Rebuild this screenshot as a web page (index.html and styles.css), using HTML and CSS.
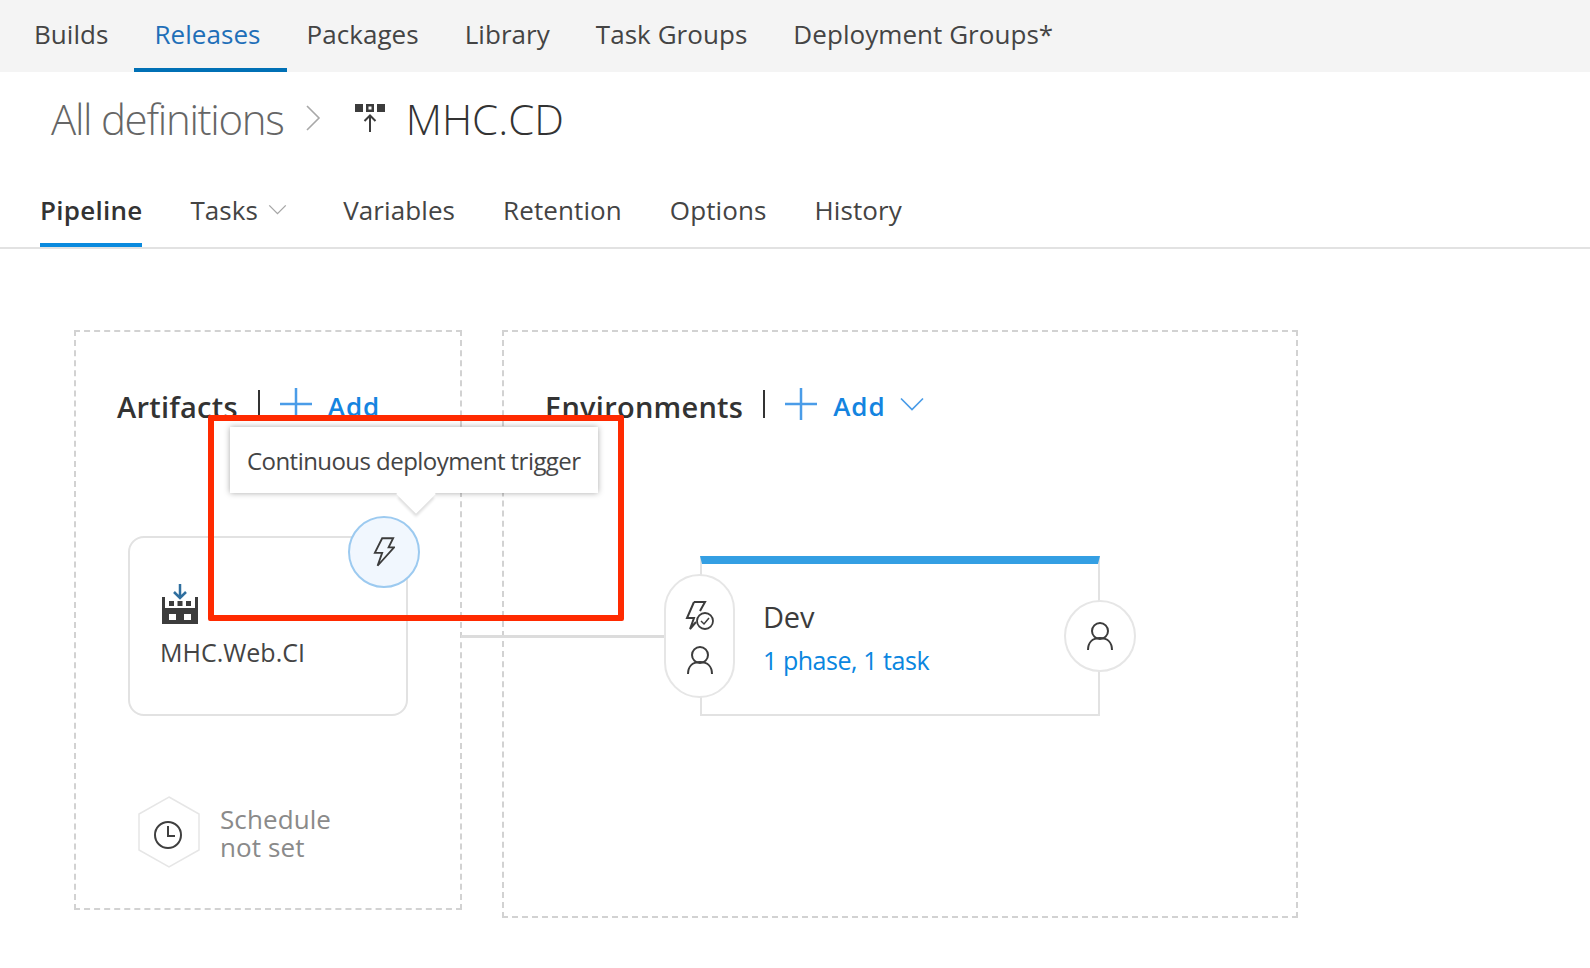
FILE: index.html
```html
<!DOCTYPE html>
<html lang="en">
<head>
<meta charset="utf-8">
<title>MHC.CD</title>
<link rel="stylesheet" href="styles.css">
</head>
<body>
<nav class="topnav">
  <a class="topnav-item">Builds</a>
  <a class="topnav-item is-active">Releases</a>
  <a class="topnav-item">Packages</a>
  <a class="topnav-item">Library</a>
  <a class="topnav-item">Task Groups</a>
  <a class="topnav-item">Deployment Groups*</a>
</nav>
<header class="crumbs">
  <span class="crumb-root">All definitions</span>
  <svg class="crumb-sep" viewBox="0 0 16 28"><path d="M2 2l12 12L2 26" fill="none" stroke="#a8a8a8" stroke-width="1.6"/></svg>
  <svg class="crumb-icon" viewBox="0 0 30 30"><path d="M0 1h8v8H0zM11 1h8v8h-8zm2.500 2.500v3h3v-3zM22 1h8v8h-8z" fill="#3c3c3c" fill-rule="evenodd"/><path d="M15 29V13M9.500 18l5.500-5.500 5.500 5.500" fill="none" stroke="#3c3c3c" stroke-width="2"/></svg>
  <span class="crumb-title">MHC.CD</span>
</header>
<div class="tabs">
  <a class="tab is-active">Pipeline</a>
  <a class="tab">Tasks<svg class="tab-chevron" viewBox="0 0 20 12"><path d="M1 1.500l9 9 9-9" fill="none" stroke="#a6a6a6" stroke-width="1.500"/></svg></a>
  <a class="tab">Variables</a>
  <a class="tab">Retention</a>
  <a class="tab">Options</a>
  <a class="tab">History</a>
</div>
<main class="canvas">
  <section class="zone zone-artifacts">
    <div class="zone-head">
      <h2 class="zone-title">Artifacts</h2>
      <span class="zone-sep"></span>
      <svg class="plus" viewBox="0 0 32 32"><path d="M16 0v32M0 16h32" stroke="#4a9ce8" stroke-width="2.500" fill="none"/></svg>
      <a class="zone-add">Add</a>
    </div>
    <div class="artifact-card">
      <svg class="artifact-icon" viewBox="0 0 36 40"><path d="M18 0v13M12 8l6 6 6-6" fill="none" stroke="#2f6f9f" stroke-width="2.500"/><path d="M0 13h3v11h30V13h3v27H0z" fill="#3c3c3c"/><path d="M7 17h5v5H7zM15.500 17h5v5h-5zM24 17h5v5h-5z" fill="#3c3c3c"/><path d="M7 30h7v6H7zM22 30h7v6h-7z" fill="#fff"/></svg>
      <div class="artifact-name">MHC.Web.CI</div>
    </div>
    <div class="schedule">
      <svg class="schedule-hex" viewBox="0 0 62 72"><path d="M31 1l30 17v36L31 71 1 54V18z" fill="#fff" stroke="#e6e6e6" stroke-width="1.500"/><circle cx="30" cy="39" r="13" fill="none" stroke="#3f3f3f" stroke-width="2"/><path d="M30 30v10h7" fill="none" stroke="#3f3f3f" stroke-width="2"/></svg>
      <div class="schedule-text">Schedule<br>not set</div>
    </div>
  </section>
  <section class="zone zone-envs">
    <div class="zone-head">
      <h2 class="zone-title">Environments</h2>
      <span class="zone-sep"></span>
      <svg class="plus" viewBox="0 0 32 32"><path d="M16 0v32M0 16h32" stroke="#4a9ce8" stroke-width="2.500" fill="none"/></svg>
      <a class="zone-add">Add</a>
      <svg class="add-chevron" viewBox="0 0 24 14"><path d="M1 1.500l11 11 11-11" fill="none" stroke="#4a9ce8" stroke-width="1.700"/></svg>
    </div>
    <div class="env-card">
      <div class="env-name">Dev</div>
      <a class="env-tasks">1 phase, 1 task</a>
    </div>
  </section>

  <div class="connector"></div>
  <div class="pill">
    <svg class="pill-bolt" viewBox="0 0 30 30"><path d="M9 1h11l-5 9M9 1L2 17h7L5 28l6-7" fill="none" stroke="#3c3c3c" stroke-width="2"/><circle cx="20" cy="20" r="8" fill="none" stroke="#3c3c3c" stroke-width="1.800"/><path d="M16 20l3 3 5-6" fill="none" stroke="#3c3c3c" stroke-width="1.500"/></svg>
    <svg class="person" viewBox="0 0 28 30"><circle cx="14" cy="10" r="8" fill="none" stroke="#3c3c3c" stroke-width="2"/><path d="M2 29c0-7 4-12 12-12s12 5 12 12" fill="none" stroke="#3c3c3c" stroke-width="2"/></svg>
  </div>
  <div class="post-approver">
    <svg class="person" viewBox="0 0 28 30"><circle cx="14" cy="10" r="8" fill="none" stroke="#3c3c3c" stroke-width="2"/><path d="M2 29c0-7 4-12 12-12s12 5 12 12" fill="none" stroke="#3c3c3c" stroke-width="2"/></svg>
  </div>
  <div class="annotation"></div>
  <div class="tooltip">Continuous deployment trigger</div>
  <div class="trigger">
    <svg class="trigger-bolt" viewBox="0 0 24 32"><path d="M10 1h12l-5 10h6L5 31l5-14H2z" fill="none" stroke="#3c3c3c" stroke-width="2" stroke-linejoin="miter"/></svg>
  </div>
</main>
</body>
</html>
```
FILE: styles.css
```css
* { box-sizing: border-box; }
html, body { margin: 0; padding: 0; }
body {
  width: 1590px;
  height: 968px;
  overflow: hidden;
  background: #fff;
  color: #333;
  font-family: "Open Sans", "Noto Sans", sans-serif;
}
a { display: block; }

.topnav {
  display: flex;
  height: 72px;
  padding-left: 14px;
  background: #f4f4f4;
}
.topnav-item {
  padding: 0 26px 0 20px;
  font-size: 26px;
  letter-spacing: 0.05px;
  line-height: 68px;
  color: #444;
}
.topnav-item.is-active {
  color: #1f6fb8;
  border-bottom: 4px solid #0070b5;
}

.crumbs {
  display: flex;
  align-items: center;
  height: 96px;
  padding: 0 0 4px 51px;
}
.crumb-root {
  font-size: 42px;
  font-weight: 300;
  letter-spacing: -1.3px;
  color: #666;
}
.crumb-sep { width: 16px; height: 28px; margin-left: 21px; }
.crumb-icon { width: 30px; height: 30px; margin-left: 34px; }
.crumb-title {
  margin-left: 21px;
  font-size: 42px;
  font-weight: 300;
  color: #333;
}

.tabs {
  display: flex;
  gap: 48px;
  height: 81px;
  padding-left: 40px;
  border-bottom: 2px solid #e2e2e2;
}
.tab {
  display: flex;
  align-items: center;
  font-size: 26px;
  letter-spacing: 0.1px;
  color: #444;
  height: 79px;
  padding-top: 4px;
}
.tab.is-active {
  font-weight: 600;
  letter-spacing: 0.25px;
  padding-top: 8px;
  color: #333;
  border-bottom: 4px solid #0a8ade;
}
.tab-chevron { width: 19px; height: 11px; margin-left: 10px; margin-right: 8px; }

.canvas {
  position: relative;
  display: flex;
  align-items: flex-start;
  gap: 40px;
  padding: 81px 0 0 74px;
}
.zone {
  border: 2px dashed #d2d2d2;
  padding: 52px 0 0 41px;
}
.zone-artifacts { width: 388px; height: 580px; }
.zone-envs { width: 796px; height: 588px; }
.zone-head {
  display: flex;
  align-items: center;
  height: 44px;
}
.zone-title {
  margin: 0;
  font-size: 29px;
  font-weight: 600;
  letter-spacing: 0.25px;
  color: #333;
}
.zone-sep { width: 2px; height: 28px; margin: 0 20px 4px; background: #333; }
.plus { width: 32px; height: 32px; margin: 0 16px 4px 0; }
.zone-add {
  font-size: 26px;
  font-weight: 600;
  letter-spacing: 0.9px;
  color: #1484e0;
}
.add-chevron { width: 24px; height: 14px; margin: 0 0 4px 15px; }

.artifact-card {
  width: 280px;
  height: 180px;
  margin: 108px 0 0 11px;
  padding: 46px 0 0 32px;
  border: 2px solid #e2e2e2;
  border-radius: 16px;
}
.artifact-icon { display: block; width: 36px; height: 40px; }
.artifact-name {
  margin: 11px 0 0 -2px;
  font-size: 25px;
  color: #444;
}
.schedule {
  display: flex;
  align-items: center;
  gap: 20px;
  margin: 80px 0 0 21px;
}
.schedule-hex { width: 62px; height: 72px; }
.schedule-text {
  padding-top: 2px;
  font-size: 26px;
  line-height: 28px;
  letter-spacing: 0.1px;
  color: #8a8a8a;
}

.env-card {
  width: 400px;
  height: 160px;
  margin: 128px 0 0 155px;
  padding: 34px 0 0 61px;
  border: 2px solid #e2e2e2;
  border-top: 8px solid #349fe3;
}
.env-name { font-size: 29px; line-height: 38px; letter-spacing: -0.2px; color: #3c3c3c; }
.env-tasks {
  margin-top: 8px;
  font-size: 25px;
  line-height: 32px;
  letter-spacing: -0.45px;
  color: #0a86e0;
}

.connector {
  position: absolute;
  left: 461px;
  top: 386px;
  width: 205px;
  height: 3px;
  background: #dcdcdc;
}
.pill {
  position: absolute;
  left: 664px;
  top: 325px;
  width: 71px;
  height: 124px;
  display: flex;
  flex-direction: column;
  align-items: center;
  justify-content: center;
  gap: 14px;
  padding-top: 3px;
  background: #fff;
  border: 2px solid #e6e6e6;
  border-radius: 36px;
}
.pill-bolt { width: 30px; height: 30px; }
.person { width: 28px; height: 30px; }
.post-approver {
  position: absolute;
  left: 1064px;
  top: 351px;
  width: 72px;
  height: 72px;
  display: flex;
  align-items: center;
  justify-content: center;
  background: #fff;
  border: 2px solid #e6e6e6;
  border-radius: 50%;
}
.annotation {
  position: absolute;
  left: 208px;
  top: 166px;
  width: 416px;
  height: 206px;
  border: 6px solid #ff2a00;
  border-radius: 2px;
}
.tooltip {
  position: absolute;
  left: 230px;
  top: 178px;
  width: 368px;
  height: 66px;
  padding-left: 17px;
  background: #fff;
  box-shadow: 0 0 6px rgba(0, 0, 0, 0.34);
  font-size: 24px;
  line-height: 67px;
  letter-spacing: -0.55px;
  white-space: nowrap;
  color: #444;
}
.tooltip::after {
  content: "";
  position: absolute;
  left: 172px;
  bottom: -15px;
  width: 28px;
  height: 28px;
  background: #fff;
  transform: rotate(45deg);
  box-shadow: 3px 3px 3px -1px rgba(0, 0, 0, 0.14);
}
.trigger {
  position: absolute;
  left: 348px;
  top: 267px;
  width: 72px;
  height: 72px;
  display: flex;
  align-items: center;
  justify-content: center;
  background: #f1f7fe;
  border: 2px solid #9ccaf0;
  border-radius: 50%;
}
.trigger-bolt { width: 22px; height: 30px; }
```
